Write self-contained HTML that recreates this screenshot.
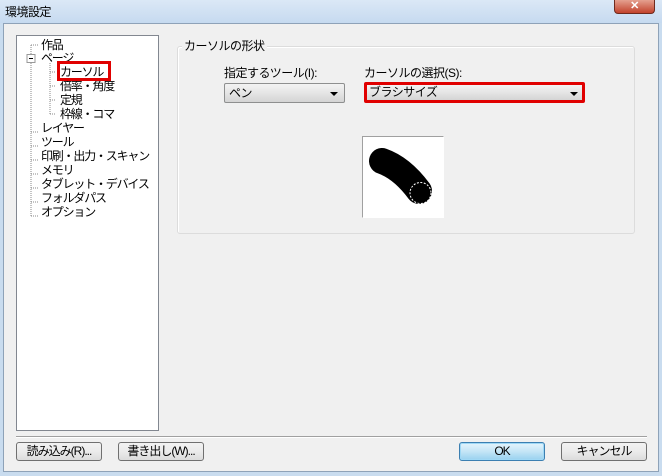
<!DOCTYPE html>
<html><head><meta charset="utf-8"><style>
*{margin:0;padding:0;box-sizing:border-box}
body{width:662px;height:476px;overflow:hidden;background:#c9dcef;font-family:"Liberation Sans","Noto Sans CJK JP",sans-serif;font-size:12px;color:#000;position:relative;letter-spacing:-0.5px}
.a{position:absolute}
.title{left:0;top:0;width:662px;height:23px;background:linear-gradient(#dbe8f6,#c6daf0)}
.close{left:614px;top:0;width:41px;height:14px;background:linear-gradient(#e4a08f,#c2422c);border:1px solid #6e2a1e;border-top:none;border-radius:0 0 4px 4px;color:#fff;font-size:11px;text-align:center;line-height:12px;font-weight:bold}
.body{left:3px;top:23px;width:656px;height:449px;background:#f0f0f0;border:1px solid #8ea2b8}
.tree{left:16px;top:35px;width:143px;height:396px;background:#fff;border:1px solid #828790}
.t{position:absolute;white-space:nowrap;line-height:14px;letter-spacing:-1.2px}
.group{left:177px;top:46px;width:458px;height:188px;border:1px solid #dcdcdc;border-radius:3px;box-shadow:inset 1px 1px 0 #fff}
.combo{border:1px solid #8e8f8f;border-radius:2px;background:linear-gradient(#f3f3f3,#e5e5e5 50%,#d4d4d4);height:20px;line-height:18px;padding-left:4px}
.arr{position:absolute;right:6px;top:8px;width:0;height:0;border-left:4px solid transparent;border-right:4px solid transparent;border-top:4px solid #000}
.btn{position:absolute;top:442px;height:19px;border:1px solid #707070;border-radius:3px;background:linear-gradient(#f2f2f2,#ebebeb 50%,#dcdcdc);text-align:center;line-height:17px;letter-spacing:-1px}
</style></head><body>
<div class="a title"></div>
<div class="a" style="left:5px;top:3px;font-size:12px">環境設定</div>
<div class="a close">✕</div>
<div class="a body"></div>
<div class="a tree">
<svg class="a" style="left:0;top:0" width="143" height="200">
<g stroke="#888" stroke-dasharray="1 1" fill="none">
<path d="M14 9v166M14 9h7M14 166h7M14 152h7M14 138h7M14 124h7M14 110h7M14 96h7M14 180h7"/>
<path d="M33 27v51M33 36h6M33 50h6M33 64h6M33 78h6"/>
<path d="M14 180V166"/>
</g>
<rect x="10" y="18.5" width="8" height="8" fill="#fff" stroke="#999"/>
<path d="M12 22.5h4" stroke="#000"/>
</svg>
<div class="t" style="left:24px;top:2px">作品</div>
<div class="t" style="left:24px;top:15px">ページ</div>
<div class="t" style="left:43px;top:29px">カーソル</div>
<div class="t" style="left:43px;top:43px">倍率・角度</div>
<div class="t" style="left:43px;top:57px">定規</div>
<div class="t" style="left:43px;top:71px">枠線・コマ</div>
<div class="t" style="left:24px;top:85px">レイヤー</div>
<div class="t" style="left:24px;top:99px">ツール</div>
<div class="t" style="left:24px;top:113px">印刷・出力・スキャン</div>
<div class="t" style="left:24px;top:127px">メモリ</div>
<div class="t" style="left:24px;top:141px">タブレット・デバイス</div>
<div class="t" style="left:24px;top:155px">フォルダパス</div>
<div class="t" style="left:24px;top:169px">オプション</div>
</div>
<div class="a" style="left:57px;top:61px;width:54px;height:20px;border:3px solid #e00000"></div>
<div class="a group"></div>
<div class="a" style="left:182px;top:38px;background:#f0f0f0;padding:0 2px;line-height:16px">カーソルの形状</div>
<div class="a" style="left:224px;top:64px">指定するツール(I):</div>
<div class="a combo" style="left:224px;top:83px;width:121px">ペン<div class="arr"></div></div>
<div class="a" style="left:364px;top:64px">カーソルの選択(S):</div>
<div class="a combo" style="left:364px;top:82px;width:221px;height:21px;border:3px solid #e00000;line-height:15px;padding-left:2px">ブラシサイズ<div class="arr" style="top:7px;right:4px"></div></div>
<div class="a" style="left:362px;top:136px;width:82px;height:82px;background:#fff;border:1px solid #a0a0a0;border-right-color:#fff;border-bottom-color:#fff"></div>
<svg class="a" style="left:362px;top:136px" width="82" height="82">
<path d="M20 25 Q40 32 57 55" stroke="#000" stroke-width="26" stroke-linecap="round" fill="none"/>
<circle cx="58.5" cy="57" r="10.5" fill="#000" stroke="#fff" stroke-width="1" stroke-dasharray="2 1.5"/>
</svg>
<div class="a" style="left:16px;top:436px;width:631px;height:2px;border-top:1px solid #a0a0a0;border-bottom:1px solid #fff"></div>
<div class="btn" style="left:16px;width:86px">読み込み(R)...</div>
<div class="btn" style="left:118px;width:86px">書き出し(W)...</div>
<div class="btn" style="left:459px;width:86px;border-color:#3c7fb1;background:linear-gradient(#e5f4fc,#c4e5f6 50%,#98d1ef);box-shadow:inset 0 0 0 1px #9fd8f5">OK</div>
<div class="btn" style="left:561px;width:86px">キャンセル</div>
</body></html>
